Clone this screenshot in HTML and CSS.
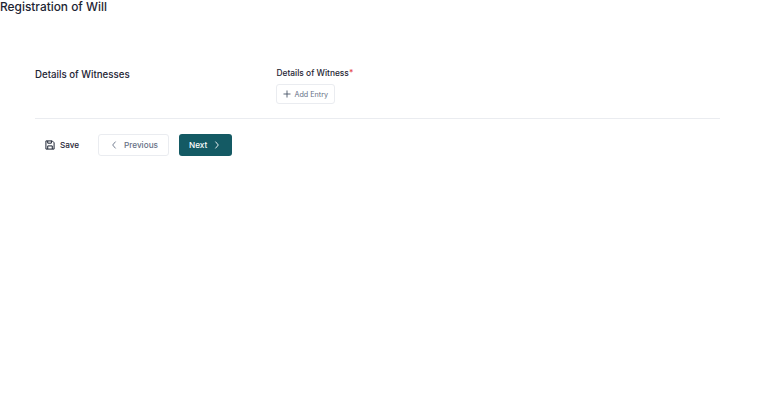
FILE: index.html
```html
<!DOCTYPE html>
<html lang="en">
<head>
  <meta charset="UTF-8">
  <meta name="viewport" content="width=device-width, initial-scale=1.0">
  <title>Registration of Will</title>
  <link rel="stylesheet" href="styles.css">
</head>
<body>
  <h1 class="page-title">Registration of Will</h1>
  <div class="container">
    <div class="section">
      <h2 class="section-title">Details of Witnesses</h2>
      <div class="field">
        <label class="field-label">Details of Witness<span class="required">*</span></label>
        <button type="button" class="add-btn">
          <svg width="8" height="8" viewBox="0 0 9 9" fill="none" stroke="#475467" stroke-width="1" stroke-linecap="round"><path d="M4.5 1v7M1 4.5h7"/></svg>
          Add Entry
        </button>
      </div>
    </div>
    <div class="actions">
      <button type="button" class="btn btn-save">
        <svg width="10" height="10" viewBox="0 0 11 11" fill="none" stroke="#1d2433" stroke-width="1.1" stroke-linejoin="round"><path d="M1 1h7l2 2v7H1z"/><path d="M3 1v2.5h4V1M3 10V6.5h5V10"/></svg>
        Save
      </button>
      <button type="button" class="btn btn-prev">
        <svg width="6" height="8" viewBox="0 0 6 9" fill="none" stroke="#667085" stroke-width="1" stroke-linecap="round" stroke-linejoin="round"><path d="M4.5 1 1.5 4.5l3 3.5"/></svg>
        Previous
      </button>
      <button type="button" class="btn btn-next">
        Next
        <svg width="6" height="8" viewBox="0 0 6 9" fill="none" stroke="#fff" stroke-width="1" stroke-linecap="round" stroke-linejoin="round"><path d="M1.5 1l3 3.5-3 3.5"/></svg>
      </button>
    </div>
  </div>
</body>
</html>
```

FILE: styles.css
```css
body {
  font-family: Inter, "Noto Sans", sans-serif;
  margin: 0;
  background-color: #fff;
  color: #1d2433;
}

.page-title {
  margin: 0;
  font-size: 11.9px;
  line-height: 14px;
  font-weight: 500;
}

.container {
  margin: 53px 40px 0 35px;
}

.section {
  display: flex;
  padding-bottom: 14px;
  border-bottom: 1px solid #eaecf0;
}

.section-title {
  width: 241.5px;
  margin: 0;
  padding-top: 1px;
  font-size: 9.7px;
  line-height: 14px;
  font-weight: 500;
}

.field-label {
  display: block;
  font-size: 8.4px;
  line-height: 12px;
  font-weight: 500;
}

.required {
  color: #e5484d;
}

button {
  font-family: inherit;
  cursor: pointer;
}

.add-btn {
  display: flex;
  align-items: center;
  gap: 4px;
  height: 20px;
  margin-top: 5px;
  margin-left: -1px;
  padding: 0 6px;
  background: #fff;
  border: 1px solid #eaecf0;
  border-radius: 3px;
  color: #667085;
  font-size: 7.2px;
}

.actions {
  display: flex;
  align-items: center;
  gap: 10px;
  margin-top: 15px;
}

.btn {
  display: flex;
  align-items: center;
  height: 22px;
  border-radius: 3px;
  font-size: 8.2px;
  font-weight: 500;
}

.btn-save {
  gap: 5px;
  width: 53px;
  padding: 0 0 0 10px;
  background: transparent;
  border: none;
  color: #1d2433;
}

.btn-prev {
  gap: 7px;
  width: 71px;
  padding: 0 0 0 12px;
  background: #fff;
  border: 1px solid #eaecf0;
  color: #667085;
}

.btn-next {
  gap: 7px;
  width: 53px;
  padding: 0 0 0 10px;
  background: #145a64;
  border: none;
  color: #fff;
}
```
